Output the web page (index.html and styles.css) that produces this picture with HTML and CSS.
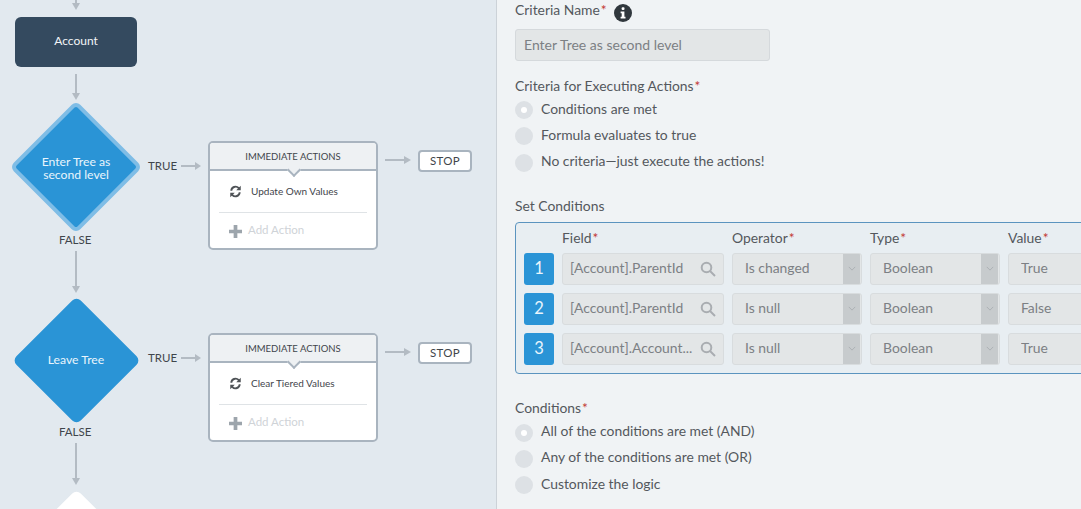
FILE: index.html
```html
<!DOCTYPE html>
<html lang="en">
<head>
<meta charset="utf-8">
<title>Process Builder</title>
<link rel="stylesheet" href="styles.css">
</head>
<body>
<div class="app">
  <section class="canvas">
    <svg class="wires" width="496" height="509" viewBox="0 0 496 509">
      <g class="wire">
        <path d="M76 0V5"/><path d="M76 74V96"/><path d="M76 251V288"/><path d="M76 443V480"/>
        <path d="M181 166H197"/><path d="M181 358H197"/><path d="M385 160H406"/><path d="M385 352H406"/>
      </g>
      <g class="head">
        <path d="M72 3L80 3L76 10Z"/><path d="M72 93L80 93L76 100Z"/><path d="M72 286L80 286L76 293Z"/><path d="M72 478L80 478L76 485Z"/>
        <path d="M195 162V170L201 166Z"/><path d="M195 354V362L201 358Z"/><path d="M404 156V164L411 160Z"/><path d="M404 348V356L411 352Z"/>
      </g>
    </svg>

    <div class="node start">Account</div>

    <div class="diamond selected d1"></div>
    <div class="diamond-label l1">Enter Tree as<br>second level</div>
    <span class="edge t1">TRUE</span>
    <span class="edge f1">FALSE</span>

    <div class="card c1">
      <div class="card-head">IMMEDIATE ACTIONS</div>
      <div class="card-row">
        <svg class="sync" viewBox="0 0 16 16"><path d="M2.5 7.2A5.6 5.6 0 0 1 12 3.4L13.6 1.8V6.6H8.8L10.6 4.8A3.7 3.7 0 0 0 4.5 7.2ZM13.5 8.8A5.6 5.6 0 0 1 4 12.6L2.4 14.2V9.4H7.2L5.4 11.2A3.7 3.7 0 0 0 11.5 8.8Z"/></svg>
        <span class="row-text">Update Own Values</span>
      </div>
      <div class="card-add"><svg class="plus" viewBox="0 0 14 14"><path d="M5 0H9V5H14V9H9V14H5V9H0V5H5Z"/></svg><span class="add-text">Add Action</span></div>
    </div>
    <div class="stop s1">STOP</div>

    <div class="diamond d2"></div>
    <div class="diamond-label l2">Leave Tree</div>
    <span class="edge t2">TRUE</span>
    <span class="edge f2">FALSE</span>

    <div class="card c2">
      <div class="card-head">IMMEDIATE ACTIONS</div>
      <div class="card-row">
        <svg class="sync" viewBox="0 0 16 16"><path d="M2.5 7.2A5.6 5.6 0 0 1 12 3.4L13.6 1.8V6.6H8.8L10.6 4.8A3.7 3.7 0 0 0 4.5 7.2ZM13.5 8.8A5.6 5.6 0 0 1 4 12.6L2.4 14.2V9.4H7.2L5.4 11.2A3.7 3.7 0 0 0 11.5 8.8Z"/></svg>
        <span class="row-text">Clear Tiered Values</span>
      </div>
      <div class="card-add"><svg class="plus" viewBox="0 0 14 14"><path d="M5 0H9V5H14V9H9V14H5V9H0V5H5Z"/></svg><span class="add-text">Add Action</span></div>
    </div>
    <div class="stop s2">STOP</div>

    <div class="diamond d3"></div>
  </section>

  <section class="form">
    <div class="name-label">
      <span class="label">Criteria Name<i>*</i></span>
      <svg class="info" viewBox="0 0 18 18"><circle cx="9" cy="9" r="9"/><rect class="info-glyph" x="7.6" y="3.2" width="2.9" height="2.8" rx="1"/><path class="info-glyph" d="M6.6 7.4H10.4V12.8H11.5V14.6H6.6V12.8H7.7V9.2H6.6Z"/></svg>
    </div>
    <div class="text-input">Enter Tree as second level</div>

    <div class="label exec-label">Criteria for Executing Actions<i>*</i></div>
    <ul class="radios">
      <li><span class="radio on"></span>Conditions are met</li>
      <li><span class="radio"></span>Formula evaluates to true</li>
      <li><span class="radio"></span>No criteria—just execute the actions!</li>
    </ul>

    <div class="label set-label">Set Conditions</div>
    <div class="conditions">
      <div class="grid">
        <span></span>
        <span class="label col-label">Field<i>*</i></span>
        <span class="label col-label">Operator<i>*</i></span>
        <span class="label col-label">Type<i>*</i></span>
        <span class="label col-label">Value<i>*</i></span>

        <span class="num">1</span>
        <div class="field lookup"><span class="clip">[Account].ParentId</span><svg class="search" viewBox="0 0 16 16"><circle cx="6.5" cy="6.5" r="4.8"/><path d="M10 10L15 15"/></svg></div>
        <div class="field select"><span class="clip">Is changed</span><span class="caret"><svg viewBox="0 0 10 6"><path d="M1 1L5 5L9 1"/></svg></span></div>
        <div class="field select"><span class="clip">Boolean</span><span class="caret"><svg viewBox="0 0 10 6"><path d="M1 1L5 5L9 1"/></svg></span></div>
        <div class="field value"><span class="clip">True</span></div>

        <span class="num">2</span>
        <div class="field lookup"><span class="clip">[Account].ParentId</span><svg class="search" viewBox="0 0 16 16"><circle cx="6.5" cy="6.5" r="4.8"/><path d="M10 10L15 15"/></svg></div>
        <div class="field select"><span class="clip">Is null</span><span class="caret"><svg viewBox="0 0 10 6"><path d="M1 1L5 5L9 1"/></svg></span></div>
        <div class="field select"><span class="clip">Boolean</span><span class="caret"><svg viewBox="0 0 10 6"><path d="M1 1L5 5L9 1"/></svg></span></div>
        <div class="field value"><span class="clip">False</span></div>

        <span class="num">3</span>
        <div class="field lookup"><span class="clip">[Account].Account...</span><svg class="search" viewBox="0 0 16 16"><circle cx="6.5" cy="6.5" r="4.8"/><path d="M10 10L15 15"/></svg></div>
        <div class="field select"><span class="clip">Is null</span><span class="caret"><svg viewBox="0 0 10 6"><path d="M1 1L5 5L9 1"/></svg></span></div>
        <div class="field select"><span class="clip">Boolean</span><span class="caret"><svg viewBox="0 0 10 6"><path d="M1 1L5 5L9 1"/></svg></span></div>
        <div class="field value"><span class="clip">True</span></div>
      </div>
    </div>

    <div class="label cond-label">Conditions<i>*</i></div>
    <ul class="radios">
      <li><span class="radio on"></span>All of the conditions are met (AND)</li>
      <li><span class="radio"></span>Any of the conditions are met (OR)</li>
      <li><span class="radio"></span>Customize the logic</li>
    </ul>
  </section>
</div>
</body>
</html>
```
FILE: styles.css
```css
* { box-sizing: border-box; }
html, body { margin: 0; height: 100%; overflow: hidden; }
body { font-family: "Lato", "Open Sans", sans-serif; color: #54585d; }

.app { display: flex; width: 100%; height: 100vh; overflow: hidden; }

/* Diagram canvas */
.canvas {
  position: relative;
  flex: 0 0 497px;
  height: 100%;
  background: #e2e9ef;
  border-right: 1px solid #ccd2d8;
  overflow: hidden;
}
.wires { position: absolute; left: 0; top: 0; }
.wire path { fill: none; stroke: #b3bbc3; stroke-width: 2; }
.head path { fill: #b3bbc3; }

.node.start {
  position: absolute; left: 15px; top: 17px; width: 122px; height: 50px;
  display: flex; align-items: center; justify-content: center;
  padding-bottom: 4px;
  background: #344a5f; border-radius: 6px;
  color: #f2f5f7; font-size: 12px;
}

.diamond {
  position: absolute; width: 91px; height: 91px;
  background: #2a94d6; border-radius: 6px;
  transform: rotate(45deg);
}
.diamond.selected { width: 94px; height: 94px; border: 4px solid #7fbde6; }
.d1 { left: 29px; top: 120px; }
.d2 { left: 30.5px; top: 314.5px; }
.d3 { left: 30.5px; top: 507.5px; background: #fff; }

.diamond-label {
  position: absolute; width: 122px; text-align: center;
  color: #e9f5fc; font-size: 12.2px; line-height: 13px;
}
.l1 { left: 15px; top: 155px; }
.l2 { left: 15px; top: 353px; }

.edge { position: absolute; font-size: 11.5px; line-height: 12px; color: #3f454b; }
.t1 { left: 148px; top: 160px; }
.t2 { left: 148px; top: 352px; }
.f1 { left: 59px; top: 234px; }
.f2 { left: 59px; top: 426px; }

.card {
  position: absolute; left: 208px; width: 170px; height: 109px;
  background: #fff; border: 2px solid #a9b4bf; border-radius: 5px;
}
.c1 { top: 141px; }
.c2 { top: 333px; }
.card-head {
  position: relative; height: 28px;
  display: flex; align-items: center; justify-content: center;
  background: #eef1f3; border-bottom: 2px solid #a9b4bf; border-radius: 3px 3px 0 0;
  font-size: 9.5px; color: #3f454b;
}
.card-head::after {
  content: ""; position: absolute; left: 79px; top: 22px; width: 8px; height: 8px;
  background: #eef1f3; border-right: 2px solid #a9b4bf; border-bottom: 2px solid #a9b4bf;
  transform: rotate(45deg);
}
.card-row {
  display: flex; align-items: center; gap: 8px;
  height: 42px; margin: 0 9px; padding-left: 9px;
  border-bottom: 1px solid #dfe3e6;
  font-size: 10px; color: #3f454b;
}
.row-text { padding-bottom: 2px; }
.sync { width: 15px; height: 15px; fill: #4f5357; }
.card-add {
  display: flex; align-items: center; gap: 6px;
  height: 36px; padding-left: 19px;
  font-size: 11.5px; color: #cfd3d7;
}
.add-text { padding-bottom: 3px; }
.plus { width: 13px; height: 13px; fill: #9da5ac; }

.stop {
  position: absolute; left: 418px; width: 54px; height: 22px;
  display: flex; align-items: center; justify-content: center;
  padding-bottom: 2px;
  background: #fff; border: 2px solid #a9b4bf; border-radius: 4px;
  font-size: 11.5px; letter-spacing: .3px; color: #3f454b;
}
.s1 { top: 150px; }
.s2 { top: 342px; }

/* Form */
.form {
  flex: 1 1 auto; min-width: 0;
  background: #f0f3f5;
  padding: 0 0 0 18px;
  overflow: hidden;
}
.label { font-size: 13.9px; line-height: 18px; color: #54585d; }
.label i { font-style: normal; color: #c23934; margin-left: 1px; }
.name-label { display: flex; align-items: center; gap: 7px; height: 20px; }
.info { width: 18px; height: 18px; fill: #30373d; margin-top: 5px; }
.info-glyph { fill: #fff; }
.text-input {
  width: 255px; height: 32px; margin-top: 9px; padding: 0 0 2px 8px;
  display: flex; align-items: center;
  background: #e3e6e7; border: 1px solid #d5d9dc; border-radius: 3px;
  font-size: 14px; color: #7c8084;
}
.exec-label { margin-top: 16px; }
.radios { list-style: none; margin: 0; padding: 0; }
.radios li {
  display: flex; align-items: center; gap: 8px;
  height: 26.3px; font-size: 13.9px; color: #54585d;
}
.radio {
  flex: none; width: 18px; height: 18px; margin-top: 4px; border-radius: 50%;
  background: #dde1e5; position: relative;
}
.radio.on::after {
  content: ""; position: absolute; left: 6px; top: 6px;
  width: 6px; height: 6px; border-radius: 50%; background: #fff;
}
.set-label { margin-top: 23px; }

.conditions {
  width: 620px; height: 152px; margin-top: 7px; padding: 4px 0 0 8px;
  background: #e8eef2; border: 1px solid #5b94bf; border-radius: 4px;
}
.grid {
  display: grid;
  grid-template-columns: 30px 162px 130px 130px 130px;
  grid-template-rows: 18px 32px 32px 32px;
  column-gap: 8px; row-gap: 8px;
  align-items: center;
}
.col-label { margin-top: 4px; }
.num {
  height: 32px; display: flex; align-items: center; justify-content: center;
  padding-bottom: 2px;
  background: #2a94d6; border-radius: 3px;
  color: #e9f5fc; font-size: 16.5px;
}
.field {
  height: 32px; display: flex; align-items: center;
  background: #e3e6e7; border: 1px solid #d8dcde; border-radius: 3px;
  font-size: 13.9px; color: #7c8084;
  overflow: hidden;
}
.clip { white-space: nowrap; flex: 1 1 auto; min-width: 0; overflow: hidden; padding-bottom: 2px; }
.lookup { padding: 0 7px 0 7px; }
.select { padding-left: 12px; }
.value { padding-left: 12px; }
.search { flex: none; width: 16px; height: 16px; fill: none; stroke: #a9adb1; stroke-width: 2; }
.caret {
  flex: none; width: 17px; height: 100%; margin-right: 1px;
  display: flex; align-items: center; justify-content: center;
  background: #c7cbcd;
}
.caret svg { width: 8px; height: 5px; fill: none; stroke: #a6abaf; stroke-width: 1; }
.cond-label { margin-top: 25.5px; }
```
